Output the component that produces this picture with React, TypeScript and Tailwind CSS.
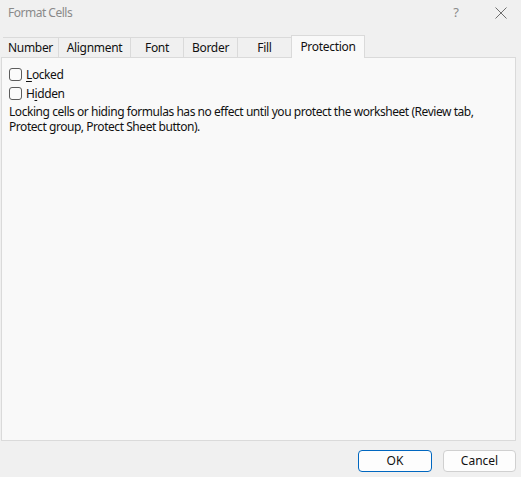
import { useState } from 'react';

const tabs = ['Number', 'Alignment', 'Font', 'Border', 'Fill', 'Protection'];
const tabWidths = ['w-[55px]', 'w-[72px]', 'w-[53px]', 'w-[54px]', 'w-[54px]', 'w-[74px]'];

function CheckRow({ before, key1, after }: { before: string; key1: string; after: string }) {
    const [checked, setChecked] = useState(false);
    return (
        <label className='flex items-center gap-[4px] h-[19px]' onClick={() => setChecked(!checked)}>
            <span className='w-[13px] h-[13px] border border-[#5c5c5c] rounded-[3px] bg-[#fbfbfb] flex items-center justify-center'>
                {checked && <span className='text-[10px] leading-none'>✓</span>}
            </span>
            <span className='text-[12px] leading-[16px] tracking-[-0.4px] text-[#111]'>
                {before}<span className='underline underline-offset-2'>{key1}</span>{after}
            </span>
        </label>
    );
}

export default function App() {
    const [active, setActive] = useState('Protection');

    return (
        <div className='w-[521px] h-[477px] bg-[#f0f0f0] flex flex-col overflow-hidden' style={{ fontFamily: '"Noto Sans", "Open Sans", sans-serif' }}>
            {/* title bar */}
            <div className='h-[25px] flex items-center pl-[8px] pr-[14px]'>
                <span className='text-[12px] tracking-[-0.5px] text-[#8a8a8a] mt-[1px]'>Format Cells</span>
                <span className='ml-auto text-[13px] text-[#8a8a8a] mr-[36px]'>?</span>
                <svg width='12' height='12' viewBox='0 0 12 12' className='text-[#6e6e6e]'>
                    <path d='M0.5 0.5 L11.5 11.5 M11.5 0.5 L0.5 11.5' stroke='currentColor' strokeWidth='1' fill='none' />
                </svg>
            </div>

            {/* tabs */}
            <div className='flex items-end h-[32px] pl-[3px]'>
                {tabs.map((t, i) => (
                    <button
                        key={t}
                        onClick={() => setActive(t)}
                        className={`${tabWidths[i]} text-[12px] tracking-[-0.3px] text-[#111] border-[#dadada] ${
                            active === t
                                ? 'h-[23px] bg-[#f9f9f9] border-x border-t relative top-[1px] z-10 pb-[1px]'
                                : 'h-[20px] bg-[#f0f0f0] border-l border-t first:border-l-0'
                        }`}
                    >
                        {t}
                    </button>
                ))}
            </div>

            {/* panel */}
            <div className='ml-[1px] w-[515px] h-[384px] bg-[#f9f9f9] border border-[#dadada] pl-[7px] pt-[7px]'>
                <CheckRow before='' key1='L' after='ocked' />
                <CheckRow before='H' key1='i' after='dden' />
                <p className='text-[12px] tracking-[-0.45px] leading-[15px] text-[#111] whitespace-nowrap mt-[1px]'>
                    Locking cells or hiding formulas has no effect until you protect the worksheet (Review tab,
                    <br />
                    Protect group, Protect Sheet button).
                </p>
            </div>

            {/* buttons */}
            <div className='flex justify-end gap-[11px] pr-[5px] mt-[9px]'>
                <button className='w-[74px] h-[22px] rounded-[4px] border border-[#0067c0] bg-[#fdfdfd] text-[12px] text-[#111]'>OK</button>
                <button className='w-[73px] h-[22px] rounded-[4px] border border-[#d0d0d0] bg-[#fdfdfd] text-[12px] text-[#111]'>Cancel</button>
            </div>
        </div>
    );
}
